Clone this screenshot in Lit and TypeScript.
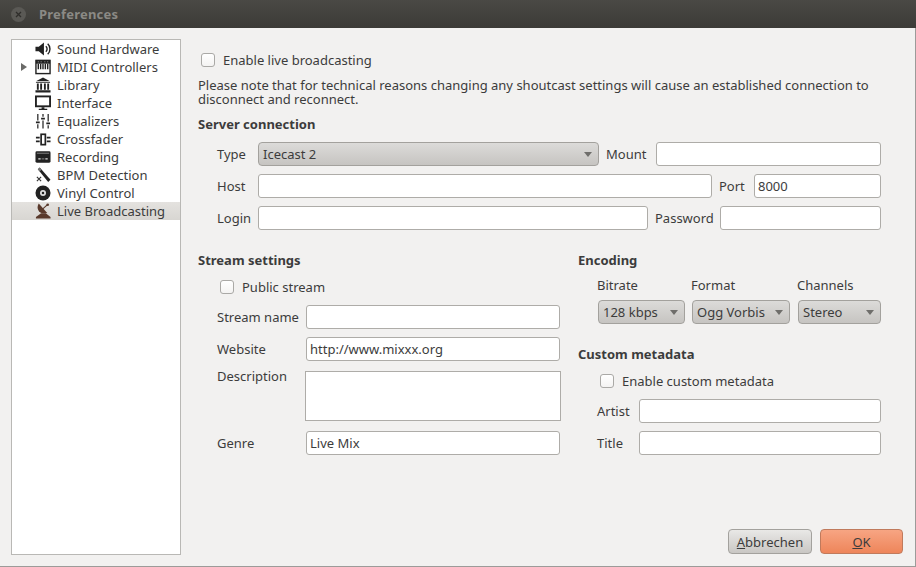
import { LitElement, html, css, svg } from 'lit';
import { customElement } from 'lit/decorators.js';

const icons: Record<string, unknown> = {
  sound: svg`<path d="M0.500 6h3.500l5.500-4.500v14L4 11H0.500z" fill="#222"/><path d="M11.500 5.500a4 4 0 0 1 0 6M13.500 3a7.500 7.500 0 0 1 0 11" fill="none" stroke="#222" stroke-width="1.500"/>`,
  midi: svg`<rect x="1" y="1.500" width="15" height="14" fill="#fff" stroke="#222" stroke-width="1.500"/><rect x="1" y="1" width="15" height="4" fill="#222"/><path d="M3 3h1M6 3h1M10 3h1M13 3h1" stroke="#aaa"/><path d="M3.500 5v6M6 5v6M8.500 5v6M11 5v6M13.500 5v6" stroke="#222" stroke-width="1.500"/>`,
  library: svg`<path d="M8.500 0.500L16 4.500H1z" fill="#222"/><path d="M1 5.500h15v1H1zM0.500 14h16v2.500H0.500z" fill="#222"/><path d="M3 7v6.500M6.500 7v6.500M10.500 7v6.500M14 7v6.500" stroke="#222" stroke-width="2"/>`,
  iface: svg`<rect x="1" y="1.500" width="15" height="10.500" fill="#fff" stroke="#222" stroke-width="2"/><path d="M7 13h3v1.500h3V16H4v-1.500h3z" fill="#222"/>`,
  eq: svg`<path d="M3 1v7M3 12v4.500M8.500 1v3M8.500 8v8.500M14 1v8M14 13v3.500" stroke="#222" stroke-width="1.300"/><path d="M1 9h4v2H1zM6.500 5h4v2h-4zM12 10h4v2h-4z" fill="#222"/>`,
  fader: svg`<path d="M1 6h4v2H1zM1 10h4v2H1zM12.500 6h4v2h-4zM12.500 10h4v2h-4z" fill="#222"/><rect x="6.500" y="3.500" width="4.500" height="11" fill="#fff" stroke="#222" stroke-width="1.800"/>`,
  rec: svg`<rect x="0.500" y="2.500" width="16" height="12" rx="1.500" fill="#222"/><path d="M2 4.500h13" stroke="#888"/><path d="M3.500 10.500h2.500M11 10.500h2.500" stroke="#ddd" stroke-width="1.500"/><path d="M7 10.500h3" stroke="#888"/>`,
  bpm: svg`<path d="M3 2.500l2-2 11.500 13-2.500 2.500z" fill="#222"/><path d="M3 2.500l2-2 2 2.300-2 2z" fill="#777"/><path d="M2 10.500l4.500 4.500M6.500 10.500L2 15" stroke="#333" stroke-width="1.200"/>`,
  vinyl: svg`<circle cx="8.500" cy="8.500" r="8" fill="#222"/><circle cx="8.500" cy="8.500" r="3.200" fill="#ddd"/><circle cx="8.500" cy="8.500" r="1.300" fill="#222"/>`,
  live: svg`<path d="M4 0.500C0.500 6 4.500 13 13 10.500z" fill="#5a3a2c"/><path d="M8 6.500L13 2" stroke="#5a3a2c" stroke-width="1.300"/><circle cx="13.500" cy="1.800" r="1.400" fill="#5a3a2c"/><path d="M6.500 11L1 15v1.500h15.500V15l-5-4z" fill="#5a3a2c"/>`,
};

const pages: [string, string, boolean?][] = [
  ['sound', 'Sound Hardware'],
  ['midi', 'MIDI Controllers', true],
  ['library', 'Library'],
  ['iface', 'Interface'],
  ['eq', 'Equalizers'],
  ['fader', 'Crossfader'],
  ['rec', 'Recording'],
  ['bpm', 'BPM Detection'],
  ['vinyl', 'Vinyl Control'],
  ['live', 'Live Broadcasting'],
];

@customElement('app-root')
export class AppRoot extends LitElement {
  static styles = css`
    :host {
      display: block;
      font-family: 'Noto Sans', sans-serif;
      font-size: 13px;
      color: #3c3c3c;
    }
    * { box-sizing: border-box; }

    .window {
      width: 916px;
      height: 567px;
      display: flex;
      flex-direction: column;
      background: #f2f1f0;
      border-right: 1px solid #9c9b99;
      border-bottom: 1px solid #9c9b99;
    }

    .titlebar {
      height: 28px;
      flex: none;
      display: flex;
      align-items: center;
      gap: 13px;
      padding-left: 11px;
      background: linear-gradient(#4a4945, #3c3b37);
      color: #8b8a85;
      font-weight: 700;
      font-size: 13px;
      letter-spacing: 0.2px;
      margin-right: -1px;
    }
    .close {
      width: 15px;
      height: 15px;
      border-radius: 50%;
      background: #5a5955;
      display: flex;
      align-items: center;
      justify-content: center;
    }

    .body {
      flex: 1;
      display: flex;
      min-height: 0;
      padding: 11px 12px 11px 11px;
    }

    .tree {
      width: 170px;
      flex: none;
      background: #fff;
      border: 1px solid #b9b8b5;
      margin-right: 17px;
    }
    .item {
      height: 18px;
      display: flex;
      align-items: center;
      position: relative;
      padding-left: 23px;
      gap: 6px;
    }
    .item svg { width: 16px; height: 16px; flex: none; }
    .item.sel { background: linear-gradient(#e4e2df, #d8d6d2); }
    .arrow {
      position: absolute;
      left: 9px;
      top: 5px;
      border-left: 6px solid #6a6a68;
      border-top: 4px solid transparent;
      border-bottom: 4px solid transparent;
    }

    .main {
      flex: 1;
      min-width: 0;
      display: flex;
      flex-direction: column;
    }

    .check-row {
      display: flex;
      align-items: center;
      gap: 8px;
      height: 16px;
    }
    .box {
      width: 14px;
      height: 14px;
      border: 1px solid #aaa9a6;
      border-radius: 3px;
      background: linear-gradient(#fff, #f4f3f2);
      flex: none;
    }
    .enable { margin: 13px 0 0 3px; }
    .note { margin: 10px 0 0; line-height: 14px; width: 690px; height: 30px; }

    h3 {
      margin: 0;
      font-size: 13px;
      line-height: 16px;
      font-weight: 700;
      color: #3c3c3c;
    }
    .server { margin-top: 8px; }
    .rows {
      display: flex;
      flex-direction: column;
      gap: 8px;
      margin: 10px 0 0 19px;
      width: 664px;
    }
    .row {
      display: flex;
      align-items: center;
      height: 24px;
    }
    .row label { flex: none; white-space: nowrap; }

    input {
      height: 24px;
      border: 1px solid #aeaca8;
      border-radius: 3px;
      background: #fff;
      font: inherit;
      color: #3c3c3c;
      padding: 0 3px;
      outline: none;
      min-width: 0;
      display: block;
    }

    .combo {
      height: 24px;
      display: flex;
      align-items: center;
      justify-content: space-between;
      border: 1px solid #a3a19d;
      border-radius: 4px;
      background: linear-gradient(#dcdbd9, #c6c4c1);
      padding: 0 6px 0 4px;
      white-space: nowrap;
    }
    .caret {
      border-top: 5px solid #6f6e6b;
      border-left: 4px solid transparent;
      border-right: 4px solid transparent;
      flex: none;
    }

    .l41 { width: 41px; }
    .grow { flex: 1; }
    .w341 { width: 341px; flex: none; }
    .w453 { width: 454px; flex: none; }
    .w390 { width: 390px; flex: none; }
    .mount { margin: 0 8px 0 7px; width: 42px; }
    .port { margin: 0 8px 0 7px; width: 27px; }
    .pass { margin: 0 7px 0 7px; width: 58px; }

    .columns {
      display: flex;
      gap: 18px;
      margin-top: 22px;
    }
    .left { width: 362px; flex: none; }
    .right { width: 303px; flex: none; }

    .public { margin: 11px 0 10px 22px; }
    .form {
      display: flex;
      flex-direction: column;
      margin-left: 19px;
    }
    .form .row { margin-bottom: 8px; }
    .form label { width: 89px; }
    .desc { display: flex; margin: 2px 0 10px 0; height: 50px; }
    .desc label { line-height: 15px; width: 88px; margin-top: -2px; flex: none; }
    .textarea {
      width: 256px;
      height: 50px;
      border: 1px solid #aeaca8;
      background: #fff;
      flex: none;
    }

    .enc {
      display: grid;
      grid-template-columns: 87px 99px 83px;
      column-gap: 7px;
      margin: 9px 0 0 20px;
      row-gap: 7px;
    }
    .enc .h { line-height: 16px; margin-left: -1px; }
    .enc .w98 { width: 98px; }

    .meta { margin-top: 22px; }
    .meta .check-row { margin: 11px 0 10px 22px; }
    .meta .form label { width: 42px; }

    .buttons {
      margin-top: auto;
      margin-bottom: 1px;
      display: flex;
      justify-content: flex-end;
      gap: 8px;
    }
    .btn {
      width: 84px;
      height: 25px;
      border: 1px solid #a3a19d;
      border-radius: 4px;
      background: linear-gradient(#e9e8e6, #c9c7c4);
      display: flex;
      align-items: center;
      justify-content: center;
    }
    .btn.ok {
      width: 83px;
      background: linear-gradient(#f7a583, #ee855a);
      border-color: #c07a5c;
    }
  `;

  private combo(text: string, cls = '') {
    return html`<div class="combo ${cls}"><span>${text}</span><span class="caret"></span></div>`;
  }

  render() {
    return html`
      <div class="window">
        <div class="titlebar">
          <span class="close">
            <svg width="7" height="7" viewBox="0 0 7 7"><path d="M1 1l5 5M6 1L1 6" stroke="#2f2e2b" stroke-width="1.300"/></svg>
          </span>
          <span>Preferences</span>
        </div>
        <div class="body">
          <div class="tree">
            ${pages.map(
              ([icon, label, arrow], i) => html`
                <div class="item ${i === pages.length - 1 ? 'sel' : ''}">
                  ${arrow ? html`<span class="arrow"></span>` : ''}
                  <svg viewBox="0 0 17 17">${icons[icon]}</svg>
                  <span>${label}</span>
                </div>
              `,
            )}
          </div>
          <div class="main">
            <div class="check-row enable"><span class="box"></span><span>Enable live broadcasting</span></div>
            <p class="note">Please note that for technical reasons changing any shoutcast settings will cause an established connection to disconnect and reconnect.</p>
            <h3 class="server">Server connection</h3>
            <div class="rows">
              <div class="row">
                <label class="l41">Type</label>
                ${this.combo('Icecast 2', 'w341')}
                <label class="mount">Mount</label>
                <input class="grow" />
              </div>
              <div class="row">
                <label class="l41">Host</label>
                <input class="w453" />
                <label class="port">Port</label>
                <input class="grow" value="8000" />
              </div>
              <div class="row">
                <label class="l41">Login</label>
                <input class="w390" />
                <label class="pass">Password</label>
                <input class="grow" />
              </div>
            </div>
            <div class="columns">
              <div class="left">
                <h3>Stream settings</h3>
                <div class="check-row public"><span class="box"></span><span>Public stream</span></div>
                <div class="form">
                  <div class="row"><label>Stream name</label><input class="grow" /></div>
                  <div class="row"><label>Website</label><input class="grow" value="http://www.mixxx.org" /></div>
                  <div class="desc"><label>Description</label><div class="textarea"></div></div>
                  <div class="row"><label>Genre</label><input class="grow" value="Live Mix" /></div>
                </div>
              </div>
              <div class="right">
                <h3>Encoding</h3>
                <div class="enc">
                  <span class="h">Bitrate</span>
                  <span class="h">Format</span>
                  <span class="h">Channels</span>
                  ${this.combo('128 kbps')}
                  ${this.combo('Ogg Vorbis', 'w98')}
                  ${this.combo('Stereo')}
                </div>
                <div class="meta">
                  <h3>Custom metadata</h3>
                  <div class="check-row"><span class="box"></span><span>Enable custom metadata</span></div>
                  <div class="form">
                    <div class="row"><label>Artist</label><input class="grow" /></div>
                    <div class="row"><label>Title</label><input class="grow" /></div>
                  </div>
                </div>
              </div>
            </div>
            <div class="buttons">
              <div class="btn"><span><u>A</u>bbrechen</span></div>
              <div class="btn ok"><span><u>O</u>K</span></div>
            </div>
          </div>
        </div>
      </div>
    `;
  }
}
